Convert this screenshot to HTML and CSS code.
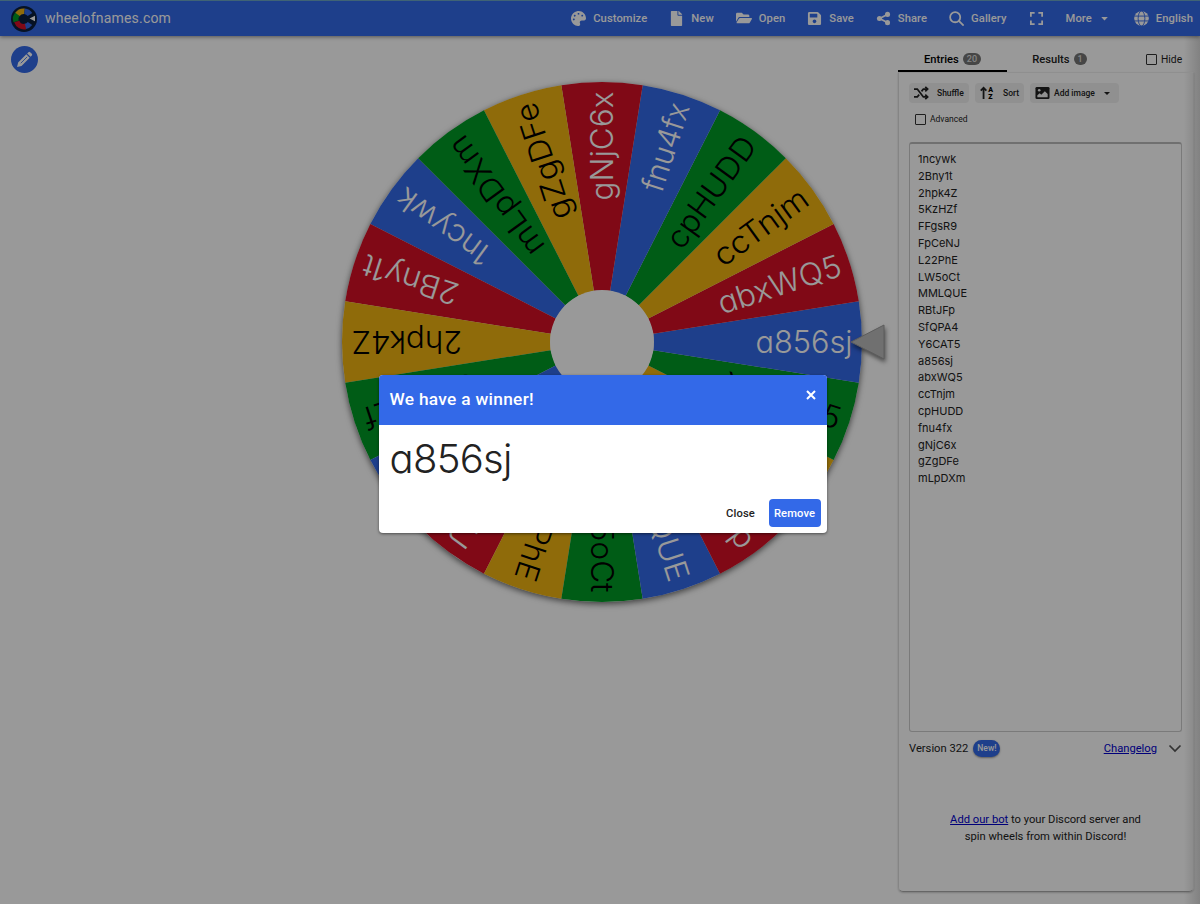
FILE: index.html
```html
<!DOCTYPE html>
<html lang="en">
<head>
    <meta charset="utf-8">
    <title>wheelofnames.com</title>
    <link rel="stylesheet" href="styles.css">
</head>
<body>
    <div class="page">
        <header class="toolbar">
            <svg class="logo" viewBox="0 0 26 26">
                <circle cx="13" cy="13" r="13" fill="#0b1f3d"/>
                <g fill="none" stroke-width="5.5">
                    <path d="M5 15.5A7.5 7.5 0 0 1 7 7.800" stroke="#009925"/>
                    <path d="M6.500 8.300A7.500 7.500 0 0 1 13.500 5.200" stroke="#eeb211"/>
                    <path d="M13.500 5.200A7.500 7.500 0 0 1 19 8.500" stroke="#3369e8"/>
                    <path d="M19 17.500A7.500 7.500 0 0 1 14 20.500" stroke="#3369e8"/>
                    <path d="M14.500 20.500A7.500 7.500 0 0 1 5.800 15.500" stroke="#d50f25"/>
                </g>
                <path d="M18.500 12.500L24 9.800V15.300Z" fill="#fff"/>
            </svg>
            <span class="site-name">wheelofnames.com</span>
            <nav class="nav">
                <a class="nav-item">
                    <svg viewBox="0 0 512 512"><path d="M204.3 5C104.9 24.4 24.8 104.3 5.2 203.4c-37 187 131.7 326.4 258.8 306.7 41.2-6.4 61.4-54.6 42.5-91.7-23.1-45.4 9.9-98.4 60.9-98.4h79.7c35.8 0 64.8-29.6 64.9-65.3C511.5 97.1 368.1-26.9 204.3 5zM96 320c-17.7 0-32-14.3-32-32s14.3-32 32-32 32 14.3 32 32-14.3 32-32 32zm32-128c-17.7 0-32-14.3-32-32s14.3-32 32-32 32 14.3 32 32-14.3 32-32 32zm128-64c-17.7 0-32-14.3-32-32s14.3-32 32-32 32 14.3 32 32-14.3 32-32 32zm128 64c-17.7 0-32-14.3-32-32s14.3-32 32-32 32 14.3 32 32-14.3 32-32 32z"/></svg>
                    Customize
                </a>
                <a class="nav-item">
                    <svg viewBox="0 0 384 512"><path d="M224 136V0H24C10.7 0 0 10.7 0 24v464c0 13.3 10.7 24 24 24h336c13.3 0 24-10.7 24-24V160H248c-13.2 0-24-10.8-24-24zm160-14.1v6.1H256V0h6.1c6.4 0 12.5 2.5 17 7l97.9 98c4.5 4.5 7 10.6 7 16.9z"/></svg>
                    New
                </a>
                <a class="nav-item">
                    <svg class="wide" viewBox="0 0 576 512"><path d="M572.7 292.1L500.3 416.2A64 64 0 0 1 445 448H45c-18.500 0-30-20-20.700-36l72.400-124.200A64 64 0 0 1 152 256h400c18.500 0 30 20 20.700 36.100zM152 224h328v-48c0-26.500-21.500-48-48-48H272l-64-64H48C21.500 64 0 85.500 0 112v278l69-118.400C86.200 242.200 118 224 152 224z"/></svg>
                    Open
                </a>
                <a class="nav-item">
                    <svg viewBox="0 0 448 512"><path d="M433.941 129.941l-83.882-83.882A48 48 0 0 0 316.118 32H48C21.490 32 0 53.490 0 80v352c0 26.510 21.490 48 48 48h352c26.510 0 48-21.490 48-48V163.882a48 48 0 0 0-14.059-33.941zM224 416c-35.346 0-64-28.654-64-64 0-35.346 28.654-64 64-64s64 28.654 64 64c0 35.346-28.654 64-64 64zm96-304.520V212c0 6.627-5.373 12-12 12H76c-6.627 0-12-5.373-12-12V108c0-6.627 5.373-12 12-12h228.520c3.183 0 6.235 1.264 8.485 3.515l3.480 3.480A11.996 11.996 0 0 1 320 111.480z"/></svg>
                    Save
                </a>
                <a class="nav-item">
                    <svg viewBox="0 0 16 16"><path d="M12.500 3.500L4 8L12.500 12.500" fill="none" stroke="#fff" stroke-width="1.800"/><circle cx="12.300" cy="3.600" r="2.700"/><circle cx="3.700" cy="8" r="2.700"/><circle cx="12.300" cy="12.400" r="2.700"/></svg>
                    Share
                </a>
                <a class="nav-item">
                    <svg viewBox="0 0 16 16"><g fill="none" stroke="#fff" stroke-width="1.900"><circle cx="6.600" cy="6.600" r="5.400"/><path d="M10.500 10.500L15.600 15.600"/></g></svg>
                    Gallery
                </a>
                <a class="nav-item">
                    <svg viewBox="0 0 16 16"><path d="M2 6V2H6M10 2H14V6M14 10V14H10M6 14H2V10" fill="none" stroke="#fff" stroke-width="1.900"/></svg>
                </a>
                <a class="nav-item more">
                    More
                    <svg viewBox="0 0 16 16"><path d="M4.500 6.500H11.500L8 10Z"/></svg>
                </a>
                <a class="nav-item">
                    <svg viewBox="0 0 16 16"><circle cx="8" cy="8" r="7.800"/><g fill="none" stroke="#3369e8"><ellipse cx="8" cy="8" rx="3.600" ry="8"/><path d="M0 5.400H16M0 10.600H16"/></g></svg>
                    English
                </a>
            </nav>
        </header>

        <div class="content">
            <div class="stage">
                <button class="edit">
                    <svg viewBox="0 0 16 16"><path d="M1 15L2 10.800L9.700 3.100L12.900 6.300L5.200 14ZM10.500 2.300L11.700 1.100Q12.500 .400 13.300 1.100L14.900 2.700Q15.600 3.500 14.900 4.300L13.700 5.500Z" fill="#fff"/><path d="M4.500 11.500L10.500 5.500" stroke="#3369e8" stroke-width=".8"/></svg>
                </button>
                <svg class="wheel" id="wheel" viewBox="-280 -280 580 580"></svg>
            </div>

            <aside class="sidebar">
                <div class="tabs">
                    <div class="tab active">Entries <span class="badge">20</span></div>
                    <div class="tab">Results <span class="badge">1</span></div>
                    <label class="hide"><span class="box"></span>Hide</label>
                </div>
                <div class="card">
                    <div class="tools">
                        <button class="tool shuffle">
                            <svg viewBox="0 0 16 14"><g fill="none" stroke="#222" stroke-width="1.900"><path d="M0 2.800H3.500L10 11.200H14M0 11.200H3.500L5.500 8.700M8 5.300L10 2.800H14"/><path d="M12 .4L14.500 2.800L12 5.200M12 8.800L14.500 11.200L12 13.600"/></g></svg>
                            Shuffle
                        </button>
                        <button class="tool sort">
                            <svg viewBox="0 0 16 14"><path d="M3.800 13.500V1.500M.8 4.500L3.800 1.500L6.800 4.500" fill="none" stroke="#222" stroke-width="1.900"/><text x="8.700" y="6">A</text><text x="8.900" y="13.700">Z</text></svg>
                            Sort
                        </button>
                        <button class="tool image">
                            <svg viewBox="0 0 16 14"><rect x=".5" y=".5" width="15" height="13" rx="1.500" fill="#222"/><circle cx="4.500" cy="4" r="1.400" fill="#f0f0f0"/><path d="M2.500 11.500V9.500L5 7.200L6.700 8.800L10.500 5L13.500 8V11.500Z" fill="#f0f0f0"/></svg>
                            Add image
                            <span class="caret"></span>
                        </button>
                    </div>
                    <label class="advanced"><span class="box"></span>Advanced</label>
                    <div class="names" id="names"></div>
                    <div class="version">
                        <span>Version 322</span>
                        <span class="new">New!</span>
                        <a class="changelog" href="#">Changelog</a>
                        <svg viewBox="0 0 14 14"><path d="M1.500 4.500L7 10L12.500 4.500" fill="none" stroke="#555" stroke-width="1.700"/></svg>
                    </div>
                    <p class="discord"><a href="#">Add our bot</a> to your Discord server and<br>spin wheels from within Discord!</p>
                </div>
            </aside>
        </div>
    </div>

    <div class="overlay">
        <div class="dialog">
            <div class="dialog-head">
                <span>We have a winner!</span>
                <svg viewBox="0 0 10 10"><path d="M1 1L9 9M9 1L1 9" stroke="#fff" stroke-width="2"/></svg>
            </div>
            <div class="winner">a856sj</div>
            <div class="actions">
                <button class="close">Close</button>
                <button class="remove">Remove</button>
            </div>
        </div>
    </div>

    <script src="script.js"></script>
</body>
</html>
```
FILE: styles.css
```css
* {
    box-sizing: border-box;
}
body {
    margin: 0;
    font-family: Roboto, "Liberation Sans", sans-serif;
    font-size: 11.2px;
    color: #222;
}
button {
    border: none;
    font-family: inherit;
    cursor: pointer;
}
.page {
    height: 904px;
    overflow: hidden;
    display: flex;
    flex-direction: column;
    background: linear-gradient(to right, #fff 1184px, #d8d8d8);
}

/* Top bar */
.toolbar {
    height: 36px;
    flex: none;
    display: flex;
    align-items: center;
    padding: 0 7px 0 11px;
    background-color: #3369e8;
    border-top: 1px solid #6ba5c4;
    box-shadow: 0 1px 4px rgba(0, 0, 0, 0.45);
    color: #fff;
}
.logo {
    width: 26px;
    height: 26px;
}
.site-name {
    margin: -2px 0 0 8px;
    font-size: 14px;
    letter-spacing: 0.2px;
}
.nav {
    margin-left: auto;
    display: flex;
    gap: 22px;
    margin-top: -1px;
}
.nav-item {
    display: flex;
    align-items: center;
    gap: 7px;
    font-size: 11.2px;
    font-weight: 500;
    letter-spacing: 0.08px;
}
.nav-item svg {
    width: 15px;
    height: 15px;
    fill: #fff;
}
.nav-item svg.wide {
    width: 16px;
    height: 16px;
}
.nav-item.more {
    gap: 5px;
}

.content {
    flex: 1;
    display: flex;
}
.stage {
    width: 898px;
    flex: none;
    display: flex;
    align-items: flex-start;
}
.edit {
    width: 27px;
    height: 27px;
    flex: none;
    margin: 10px 0 0 11px;
    padding: 5px;
    border-radius: 50%;
    background-color: #3369e8;
}
.edit svg {
    display: block;
    width: 17px;
    height: 17px;
}
.wheel {
    width: 580px;
    height: 580px;
    flex: none;
    margin: 26px 0 0 284px;
}
.wheel text {
    font-family: Inter, sans-serif;
    font-weight: 350;
    font-size: 31px;
    font-feature-settings: "cv11";
}
.rim {
    filter: drop-shadow(0 2px 3px rgba(0, 0, 0, 0.6));
}
.pointer {
    fill: #bbb;
    stroke: #999;
    filter: drop-shadow(1px 3px 2px rgba(0, 0, 0, 0.5));
}

/* Side panel */
.sidebar {
    width: 296px;
    padding-top: 11px;
}
.tabs {
    display: flex;
    height: 25px;
    align-items: stretch;
}
.tab {
    width: 109px;
    display: flex;
    align-items: center;
    justify-content: center;
    gap: 4px;
    font-weight: 500;
}
.tab.active {
    border-bottom: 2px solid #000;
    padding-top: 1px;
    color: #000;
}
.tab:nth-child(2) {
    width: 105px;
    padding-bottom: 1px;
}
.badge {
    padding: 0 4px;
    border-radius: 6px;
    background-color: #757575;
    color: #ddd;
    font-size: 9px;
    line-height: 12px;
}
.hide {
    display: flex;
    align-items: center;
    gap: 5px;
    margin-left: 34px;
    font-size: 10.3px;
}
.box {
    width: 11px;
    height: 11px;
    margin-right: -1px;
    border: 1px solid #333;
    border-radius: 1px;
}
.card {
    height: 820px;
    padding: 10px 11px 0 10px;
    border: 1px solid #dedede;
    border-top-color: #eee;
    border-bottom: 1px solid #ababab;
    border-radius: 0 0 5px 5px;
    box-shadow: 0 1px 2px rgba(0, 0, 0, 0.2);
}
.tools {
    display: flex;
    gap: 6px;
}
.tool {
    height: 20px;
    display: flex;
    align-items: center;
    padding: 0 5px;
    border-radius: 4px;
    background-color: #f0f0f0;
    color: #222;
    font-size: 8.5px;
    font-weight: 500;
    white-space: nowrap;
}
.tool svg {
    width: 15px;
    height: 14px;
    flex: none;
    overflow: visible;
}
.tool text {
    font-size: 7.5px;
    font-weight: 900;
}
.shuffle {
    width: 60px;
    gap: 8px;
}
.sort {
    width: 49px;
    gap: 8px;
}
.image {
    width: 89px;
    gap: 4px;
}
.caret {
    margin-left: 5px;
    border: 3px solid transparent;
    border-top-color: #222;
    border-bottom: none;
}
.advanced {
    display: flex;
    align-items: center;
    gap: 5px;
    margin: 10px 0 0 6px;
    height: 12px;
    font-size: 8.5px;
}
.names {
    height: 590px;
    margin-top: 17px;
    padding: 7px 8px;
    border: 1px solid #ccc;
    border-top: 2px solid #bbb;
    border-radius: 3px;
    font-family: Inter, sans-serif;
    font-size: 11px;
    line-height: 16.8px;
}
.version {
    display: flex;
    align-items: center;
    height: 20px;
    margin-top: 6px;
}
.new {
    margin-left: 5px;
    padding: 0 4px;
    border-radius: 9px;
    background-color: #3369e8;
    color: #fff;
    font-size: 8.5px;
    font-weight: 500;
    line-height: 17px;
    box-shadow: 0 1px 2px rgba(0, 0, 0, 0.4);
}
a[href] {
    color: #0000cc;
}
.changelog {
    margin-left: auto;
}
.version svg {
    width: 14px;
    height: 14px;
    margin-left: 11px;
}
.discord {
    margin: 53px 0 0;
    text-align: center;
    line-height: 17px;
}

/* Winner dialog */
.overlay {
    position: absolute;
    inset: 0;
    display: flex;
    align-items: center;
    justify-content: center;
    padding: 4px 0 0 5px;
    background-color: rgba(0, 0, 0, 0.4);
}
.dialog {
    width: 448px;
    height: 158px;
    border-radius: 4px;
    overflow: hidden;
    background-color: #fff;
    box-shadow: 0 1px 3px rgba(0, 0, 0, 0.5);
}
.dialog-head {
    height: 50px;
    display: flex;
    justify-content: space-between;
    padding: 14px 11px 0 11px;
    background-color: #3369e8;
    color: #fff;
    font-size: 17.3px;
    font-weight: 500;
    line-height: 20px;
    letter-spacing: 0.3px;
}
.dialog-head svg {
    width: 10px;
    height: 10px;
    margin-top: 1px;
}
.winner {
    height: 74px;
    padding: 8px 11px 0;
    font-family: Inter, sans-serif;
    font-feature-settings: "cv11";
    font-size: 40px;
    font-weight: 300;
    line-height: 52px;
    letter-spacing: -0.7px;
}
.actions {
    display: flex;
    justify-content: flex-end;
    padding-right: 6px;
}
.actions button {
    height: 28px;
    border-radius: 4px;
    font-size: 11.2px;
    font-weight: 500;
    letter-spacing: 0.1px;
}
.close {
    width: 44px;
    margin-right: 6px;
    padding: 0;
    background: none;
    color: #222;
}
.remove {
    width: 52px;
    padding: 0;
    background-color: #3369e8;
    color: #fff;
}
```
FILE: script.js
```js
// name and the length of its label on the wheel
const entries = [
    ['1ncywk', 109], ['2Bny1t', 99], ['2hpk4Z', 111], ['5KzHZf', 118], ['FFgsR9', 115],
    ['FpCeNJ', 122], ['L22PhE', 115], ['LW5oCt', 118], ['MMLQUE', 145], ['RBtJFp', 108],
    ['SfQPA4', 122], ['Y6CAT5', 121], ['a856sj', 97], ['abxWQ5', 128], ['ccTnjm', 109],
    ['cpHUDD', 130], ['fnu4fx', 91], ['gNjC6x', 109], ['gZgDFe', 121], ['mLpDXm', 140]
];
const colors = ['#3369e8', '#d50f25', '#eeb211', '#009925'];
const winner = 12;
const radius = 260;
const hub = 52;
const step = 360 / entries.length;

function point(r, deg) {
    const a = deg * Math.PI / 180;
    return (r * Math.cos(a)).toFixed(2) + ' ' + (r * Math.sin(a)).toFixed(2);
}

function drawWheel() {
    let svg = `<circle class="rim" r="${radius}" fill="#fff"/>`;
    entries.forEach(([name, length], i) => {
        const angle = (winner - i) * step;
        const color = colors[i % 4];
        const textColor = i % 4 < 2 ? '#fff' : '#000';
        svg += `<path fill="${color}" d="M${point(hub, angle - step / 2)}L${point(radius, angle - step / 2)}` +
            `A${radius} ${radius} 0 0 1 ${point(radius, angle + step / 2)}L${point(hub, angle + step / 2)}Z"/>`;
        svg += `<text transform="rotate(${angle})" x="${250.5 - length}" y="11" fill="${textColor}" ` +
            `textLength="${length}" lengthAdjust="spacingAndGlyphs">${name}</text>`;
    });
    svg += `<circle r="${hub}" fill="#fff"/>`;
    svg += '<path class="pointer" d="M249 0L282 -17V17Z"/>';
    document.getElementById('wheel').innerHTML = svg;
}

function listNames() {
    const list = document.getElementById('names');
    entries.forEach(([name]) => {
        const row = document.createElement('div');
        row.innerText = name;
        list.appendChild(row);
    });
}

drawWheel();
listNames();
```
